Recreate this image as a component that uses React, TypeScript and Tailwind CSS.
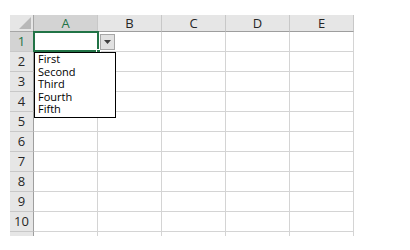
const COLS = ["A", "B", "C", "D", "E"];
const ROWS = [1, 2, 3, 4, 5, 6, 7, 8, 9, 10];
const OPTIONS = ["First", "Second", "Third", "Fourth", "Fifth"];

const font = { fontFamily: '"Open Sans", "Noto Sans", sans-serif' };

function HeaderRow() {
  return (
    <div className="flex h-[17px]">
      {/* corner */}
      <div className="relative w-[24px] shrink-0 border-r border-b border-[#a6a6a6] bg-[#e6e6e6]">
        <svg
          width="12"
          height="12"
          viewBox="0 0 12 12"
          className="absolute right-[2px] bottom-[2px]"
        >
          <path d="M12 0V12H0z" fill="#b8b8b8" />
        </svg>
      </div>
      {COLS.map((c) => (
        <div
          key={c}
          className={`flex w-[64px] shrink-0 items-center justify-center border-r border-b border-r-[#c8c8c8] border-b-[#9e9e9e] text-[13px] leading-none ${
            c === "A" ? "bg-[#d3d3d3] text-[#217346]" : "bg-[#e6e6e6] text-[#262626]"
          }`}
        >
          {c}
        </div>
      ))}
    </div>
  );
}

function Row({ n }: { n: number }) {
  return (
    <div className="flex h-[20px]">
      <div
        className={`flex w-[24px] shrink-0 items-center justify-center border-r border-b border-r-[#9e9e9e] border-b-[#c8c8c8] text-[13px] leading-none ${
          n === 1 ? "bg-[#d3d3d3] text-[#217346]" : "bg-[#e6e6e6] text-[#262626]"
        }`}
      >
        {n}
      </div>
      {COLS.map((c) => (
        <div
          key={c}
          className="w-[64px] shrink-0 border-r border-b border-[#d4d4d4] bg-white"
        />
      ))}
    </div>
  );
}

export default function App() {
  return (
    <div
      className="relative h-[250px] w-[410px] overflow-hidden bg-white pt-[15px] pl-[10px]"
      style={font}
    >
      <HeaderRow />
      {ROWS.map((n) => (
        <Row key={n} n={n} />
      ))}
      {/* partial next row */}
      <div className="flex h-[4px]">
        <div className="w-[24px] shrink-0 border-r border-[#9e9e9e] bg-[#e6e6e6]" />
        {COLS.map((c) => (
          <div key={c} className="w-[64px] shrink-0 border-r border-[#d4d4d4]" />
        ))}
      </div>

      {/* active cell A1 */}
      <div className="absolute left-[33px] top-[31px] h-[21px] w-[66px] border-2 border-[#217346]" />
      <div className="absolute left-[96px] top-[49px] h-[5px] w-[5px] border border-white bg-[#217346]" />

      {/* dropdown button */}
      <div className="absolute left-[100px] top-[34px] flex h-[16px] w-[15px] items-center justify-center border border-[#a6a6a6] bg-[#e1e1e1]">
        <svg width="7" height="4" viewBox="0 0 7 4">
          <path d="M0 0H7L3.5 4z" fill="#404040" />
        </svg>
      </div>

      {/* list */}
      <div className="absolute left-[34px] top-[52px] flex h-[66px] w-[82px] flex-col border border-black bg-white pl-[3px]">
        {OPTIONS.map((o) => (
          <div key={o} className="h-[12.6px] text-[11px] leading-[12.6px] text-black">
            {o}
          </div>
        ))}
      </div>
    </div>
  );
}
